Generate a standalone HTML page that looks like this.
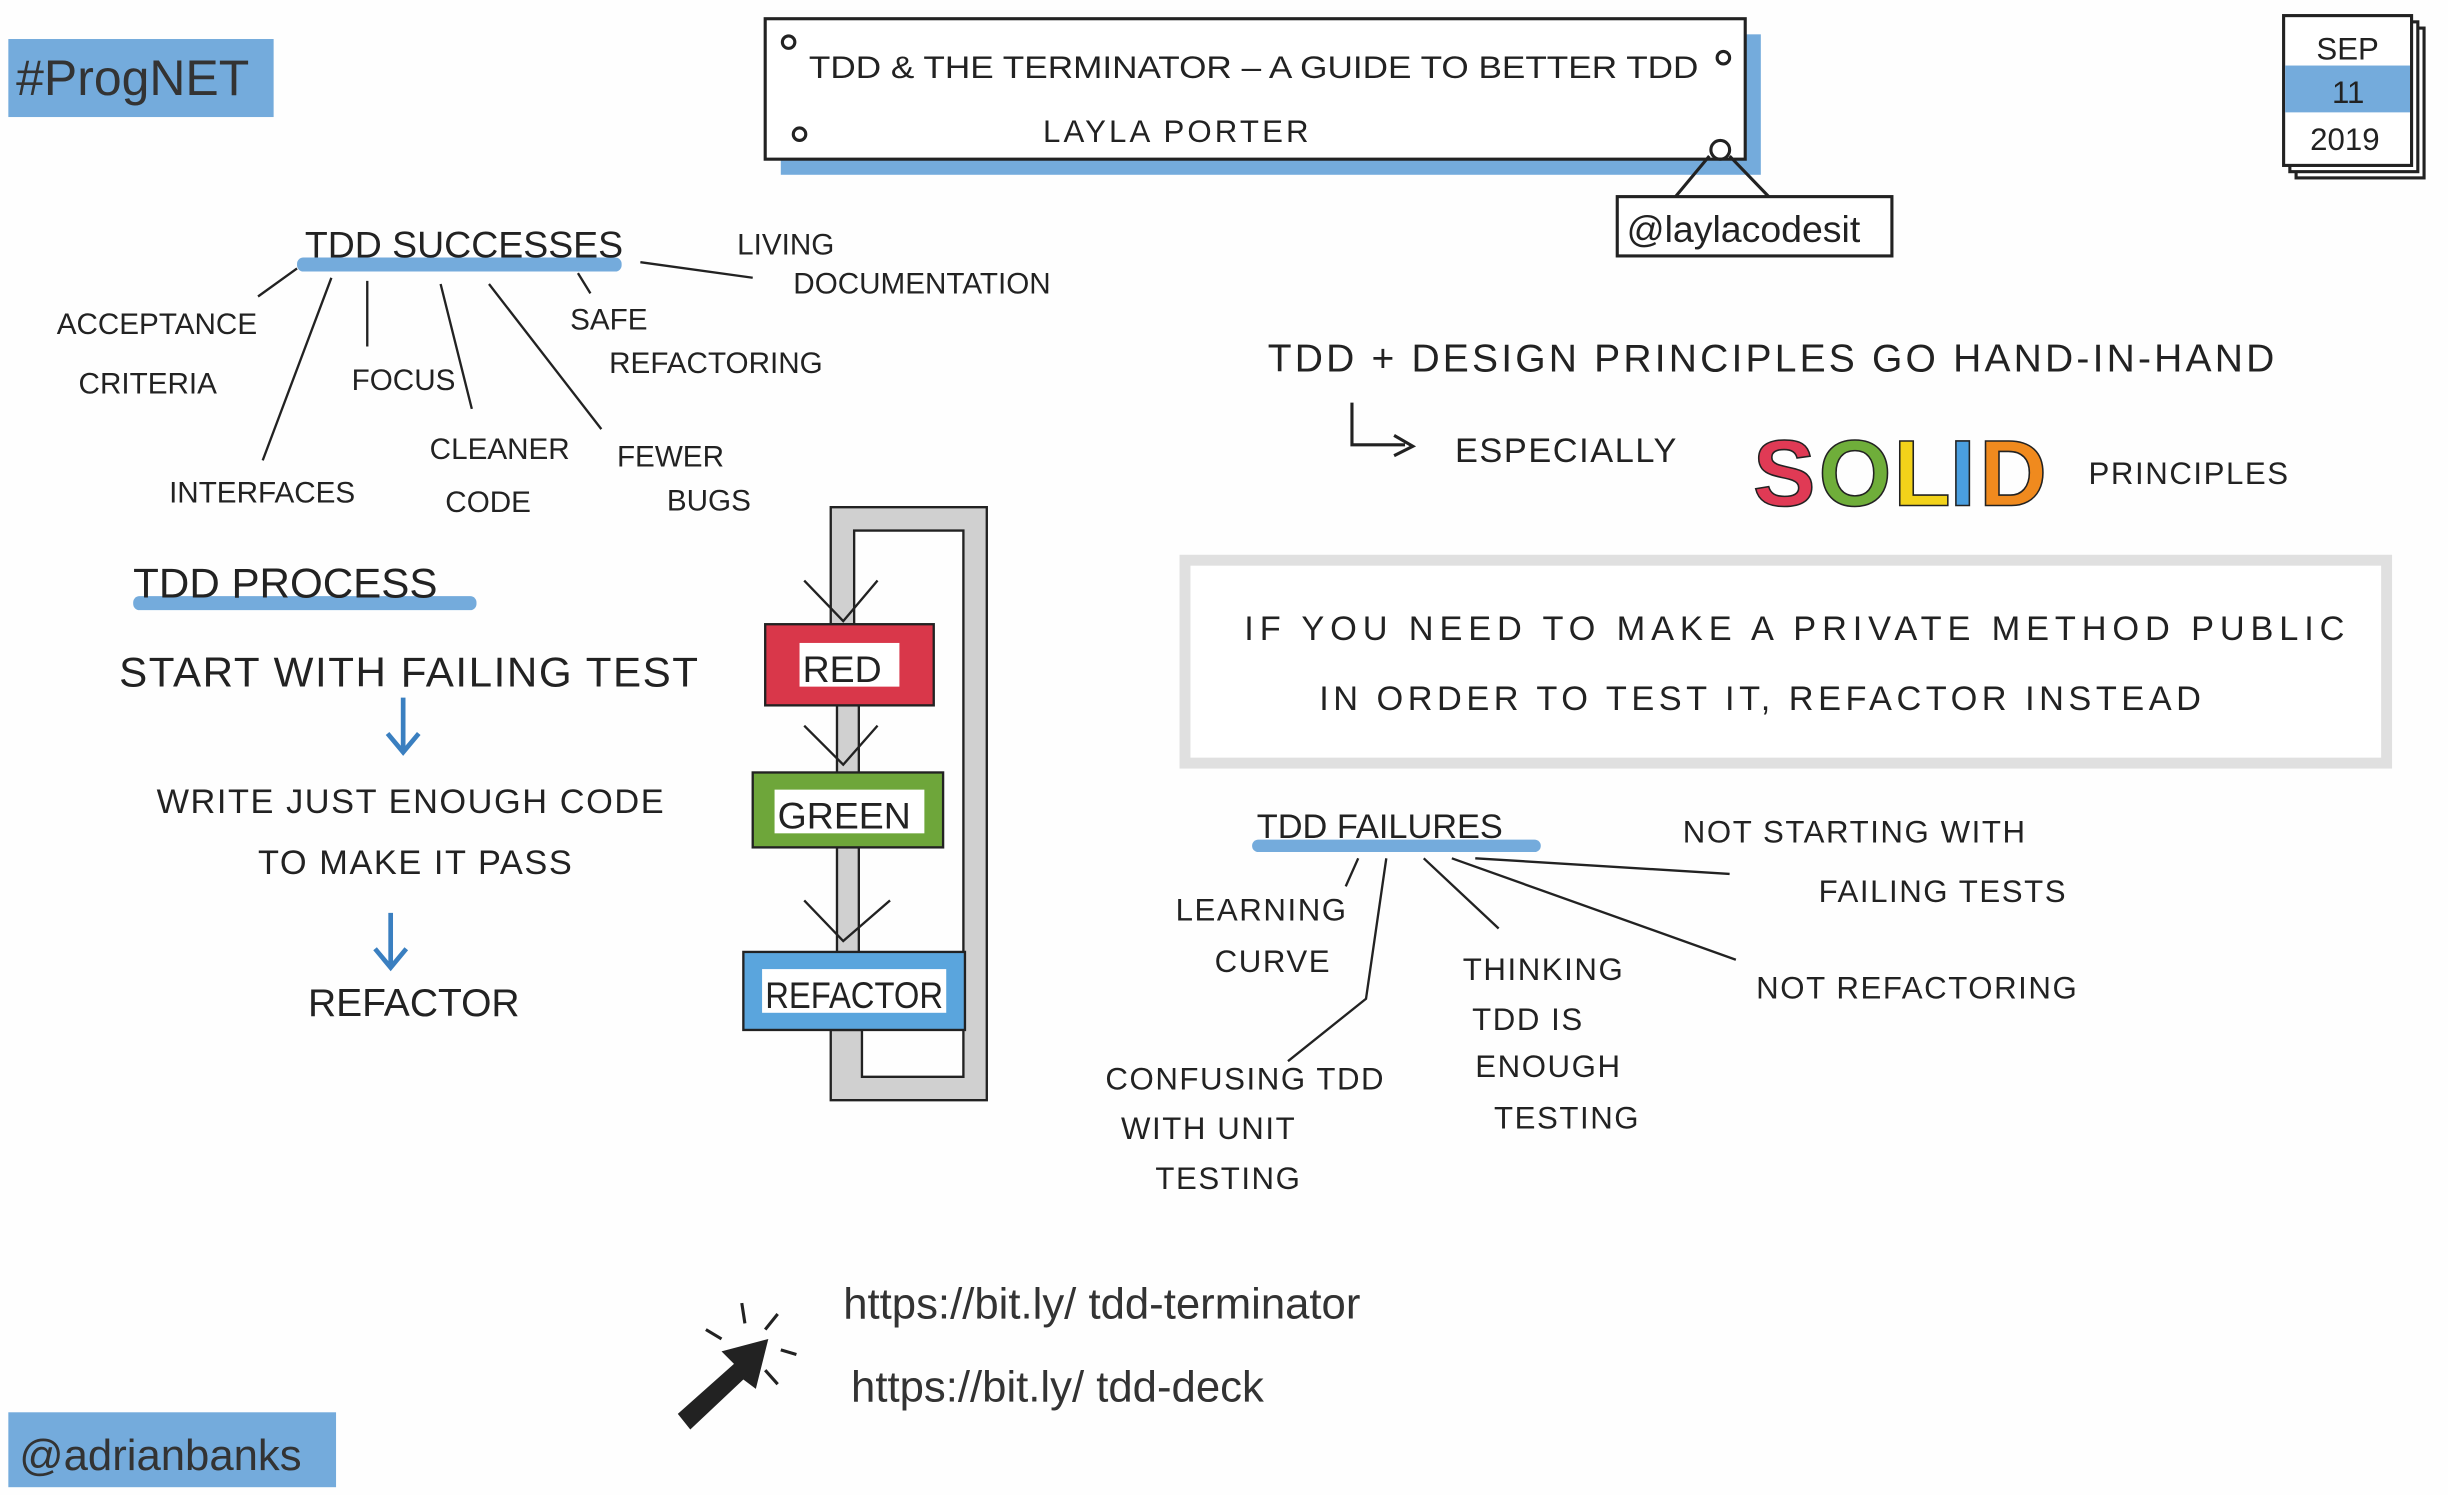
<!DOCTYPE html>
<html><head><meta charset="utf-8"><style>
html,body{margin:0;padding:0;background:#fff;width:2448px;height:1495px;overflow:hidden}
svg{display:block}
text{font-family:"Liberation Sans",sans-serif;fill:#222}
</style></head><body>
<svg width="2448" height="1495" viewBox="0 0 1568 958" xmlns="http://www.w3.org/2000/svg">
<rect width="1568" height="958" fill="#fefefe"/>
<!-- ProgNET -->
<rect x="5" y="25" width="170" height="50" fill="#74abdc"/>
<text x="10" y="61" font-size="32" style="fill:#333">#ProgNET</text>
<!-- title -->
<rect x="500" y="22" width="628" height="90" fill="#74abdc"/>
<rect x="490" y="12" width="628" height="90" fill="#fff" stroke="#222" stroke-width="2"/>
<circle cx="505" cy="27" r="4" fill="none" stroke="#222" stroke-width="2"/>
<circle cx="1104" cy="37" r="4" fill="none" stroke="#222" stroke-width="2"/>
<circle cx="512" cy="86" r="4" fill="none" stroke="#222" stroke-width="2"/>
<circle cx="1102" cy="96" r="6" fill="none" stroke="#222" stroke-width="2"/>
<text x="518" y="50" font-size="20" textLength="570" lengthAdjust="spacingAndGlyphs">TDD &amp; THE TERMINATOR – A GUIDE TO BETTER TDD</text>
<text x="668" y="91" font-size="20" letter-spacing="2">LAYLA PORTER</text>
<path d="M1095 100 L1070 130 M1108 100 L1135 128" stroke="#222" stroke-width="2" fill="none"/>
<rect x="1036" y="126" width="176" height="38" fill="#fff" stroke="#222" stroke-width="2"/>
<text x="1042" y="155" font-size="24">@laylacodesit</text>
<!-- calendar -->
<rect x="1471" y="18" width="82" height="96" fill="#fff" stroke="#222" stroke-width="2"/>
<rect x="1467" y="14" width="82" height="96" fill="#fff" stroke="#222" stroke-width="2"/>
<rect x="1463" y="10" width="82" height="96" fill="#fff" stroke="#222" stroke-width="2"/>
<rect x="1464" y="42" width="80" height="30" fill="#74abdc"/>
<text x="1484" y="38" font-size="20">SEP</text>
<text x="1494" y="66" font-size="20">11</text>
<text x="1480" y="96" font-size="20">2019</text>
<!-- successes -->
<rect x="190" y="165" width="208" height="9" rx="4" fill="#74abdc"/>
<text x="195" y="165" font-size="24">TDD SUCCESSES</text>
<g font-size="19">
<text x="472" y="163">LIVING</text>
<text x="508" y="188">DOCUMENTATION</text>
<text x="36" y="214">ACCEPTANCE</text>
<text x="50" y="252">CRITERIA</text>
<text x="365" y="211">SAFE</text>
<text x="390" y="239">REFACTORING</text>
<text x="225" y="250">FOCUS</text>
<text x="108" y="322">INTERFACES</text>
<text x="275" y="294">CLEANER</text>
<text x="285" y="328">CODE</text>
<text x="395" y="299">FEWER</text>
<text x="427" y="327">BUGS</text>
</g>
<path d="M190 172 L165 190 M212 178 L168 295 M235 180 L235 222 M282 182 L302 262 M313 182 L385 275 M370 175 L378 188 M410 168 L482 178" stroke="#222" stroke-width="1.5" fill="none"/>
<!-- process -->
<rect x="85" y="382" width="220" height="9" rx="4" fill="#74abdc"/>
<text x="85" y="383" font-size="27">TDD PROCESS</text>
<text x="76" y="440" font-size="27" letter-spacing="1">START WITH FAILING TEST</text>
<path d="M258 447 L258 480 M248 470 L258 482 L268 470" stroke="#3a7fc0" stroke-width="3" fill="none"/>
<text x="100" y="521" font-size="22" letter-spacing="1">WRITE JUST ENOUGH CODE</text>
<text x="165" y="560" font-size="22" letter-spacing="1">TO MAKE IT PASS</text>
<path d="M250 585 L250 618 M240 608 L250 620 L260 608" stroke="#3a7fc0" stroke-width="3" fill="none"/>
<text x="197" y="651" font-size="25">REFACTOR</text>
<!-- loop -->
<path d="M532 325 H632 V705 H532 V660 H552 V690 H617 V340 H547 V400 H532 Z" fill="#d0d0d0" stroke="#222" stroke-width="1.5"/>
<rect x="536" y="452" width="14" height="44" fill="#d0d0d0" stroke="#222" stroke-width="1.5"/>
<rect x="536" y="543" width="14" height="68" fill="#d0d0d0" stroke="#222" stroke-width="1.5"/>
<path d="M515 372 L540 398 L562 372 M515 465 L540 490 L562 465 M515 577 L540 603 L570 577" stroke="#222" stroke-width="1.5" fill="none"/>
<rect x="490" y="400" width="108" height="52" fill="#d9374a" stroke="#222" stroke-width="1.5"/>
<rect x="512" y="412" width="64" height="28" fill="#fff"/>
<text x="514" y="437" font-size="24">RED</text>
<rect x="482" y="495" width="122" height="48" fill="#6ea63a" stroke="#222" stroke-width="1.5"/>
<rect x="496" y="506" width="96" height="28" fill="#fff"/>
<text x="498" y="531" font-size="24">GREEN</text>
<rect x="476" y="610" width="142" height="50" fill="#5aa5dd" stroke="#222" stroke-width="1.5"/>
<rect x="488" y="621" width="118" height="28" fill="#fff"/>
<text x="490" y="646" font-size="24" textLength="114" lengthAdjust="spacingAndGlyphs">REFACTOR</text>
<!-- design principles -->
<text x="812" y="238" font-size="25" textLength="645" lengthAdjust="spacing">TDD + DESIGN PRINCIPLES  GO  HAND-IN-HAND</text>
<path d="M866 258 V285 H900 M893 279 L905 286 L893 292" stroke="#222" stroke-width="2" fill="none"/>
<text x="932" y="296" font-size="22" letter-spacing="1">ESPECIALLY</text>
<g font-size="60" font-weight="bold" stroke="#222" stroke-width="1">
<text x="1123" y="324" style="fill:#e03a55">S</text>
<text x="1165" y="324" style="fill:#6fae3a">O</text>
<text x="1213" y="324" style="fill:#f2d21a">L</text>
<text x="1249" y="324" style="fill:#4a9fe0">I</text>
<text x="1268" y="324" style="fill:#f08a1e">D</text>
</g>
<text x="1338" y="310" font-size="20" letter-spacing="1">PRINCIPLES</text>
<rect x="759" y="359" width="770" height="130" fill="#fff" stroke="#e0e0e0" stroke-width="7"/>
<text x="797" y="410" font-size="22" textLength="705" lengthAdjust="spacing">IF YOU NEED TO MAKE A PRIVATE METHOD PUBLIC</text>
<text x="845" y="455" font-size="22" textLength="565" lengthAdjust="spacing">IN ORDER TO TEST IT, REFACTOR INSTEAD</text>
<!-- failures -->
<rect x="802" y="538" width="185" height="8" rx="4" fill="#74abdc"/>
<text x="805" y="537" font-size="22">TDD FAILURES</text>
<g font-size="20" letter-spacing="1">
<text x="1078" y="540">NOT STARTING WITH</text>
<text x="1165" y="578">FAILING TESTS</text>
<text x="753" y="590">LEARNING</text>
<text x="778" y="623">CURVE</text>
<text x="937" y="628">THINKING</text>
<text x="943" y="660">TDD IS</text>
<text x="945" y="690">ENOUGH</text>
<text x="957" y="723">TESTING</text>
<text x="1125" y="640">NOT REFACTORING</text>
<text x="708" y="698">CONFUSING TDD</text>
<text x="718" y="730">WITH UNIT</text>
<text x="740" y="762">TESTING</text>
</g>
<path d="M870 550 L862 568 M888 550 L875 640 L825 680 M912 550 L960 595 M930 550 L1112 615 M945 550 L1108 560" stroke="#222" stroke-width="1.5" fill="none"/>
<!-- links: cursor arrow -->
<path d="M492 858 L462 866 L470 874 L434 906 L442 916 L476 884 L484 890 Z" fill="#222"/>
<path d="M452 852 L462 858 M475 835 L477 848 M498 842 L490 852 M500 865 L510 868 M490 878 L498 887" stroke="#222" stroke-width="2"/>
<text x="540" y="845" font-size="28" style="fill:#333">https://bit.ly/ tdd-terminator</text>
<text x="545" y="898" font-size="28" style="fill:#333">https://bit.ly/ tdd-deck</text>
<rect x="5" y="905" width="210" height="48" fill="#74abdc"/>
<text x="12" y="942" font-size="28" style="fill:#333">@adrianbanks</text>
</svg>
</body></html>
